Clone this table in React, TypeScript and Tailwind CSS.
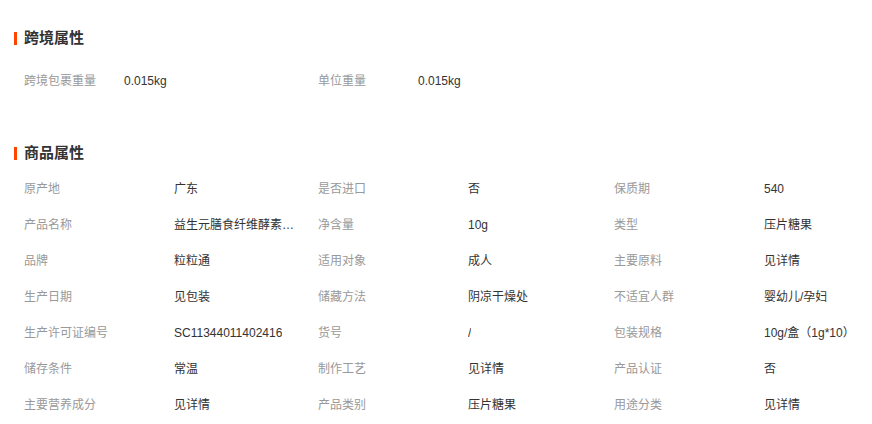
import React from 'react';

const font = { fontFamily: '"Liberation Sans", "Noto Sans CJK SC", sans-serif' };

const crossBorder = [
    { label: '跨境包裹重量', value: '0.015kg' },
    { label: '单位重量', value: '0.015kg' },
];

const attrs = [
    ['原产地', '广东'], ['是否进口', '否'], ['保质期', '540'],
    ['产品名称', '益生元膳食纤维酵素压片糖果'], ['净含量', '10g'], ['类型', '压片糖果'],
    ['品牌', '粒粒通'], ['适用对象', '成人'], ['主要原料', '见详情'],
    ['生产日期', '见包装'], ['储藏方法', '阴凉干燥处'], ['不适宜人群', '婴幼儿/孕妇'],
    ['生产许可证编号', 'SC11344011402416'], ['货号', '/'], ['包装规格', '10g/盒（1g*10）'],
    ['储存条件', '常温'], ['制作工艺', '见详情'], ['产品认证', '否'],
    ['主要营养成分', '见详情'], ['产品类别', '压片糖果'], ['用途分类', '见详情'],
];

function SectionTitle({ title }: { title: string }) {
    return (
        <div className="flex items-center h-4 pl-[14px]">
            <div className="w-[3px] h-[13px] bg-[#ff4400] mr-[7px]" />
            <span className="text-[15px] font-bold text-[#333333] leading-4">{title}</span>
        </div>
    );
}

export default function App() {
    return (
        <div className="w-[872px] h-[424px] bg-white overflow-hidden text-[12px]" style={font}>
            <div className="pt-[30px]">
                <SectionTitle title="跨境属性" />
                <div className="flex pl-[24px] mt-[17px]">
                    {crossBorder.map((item) => (
                        <div key={item.label} className="flex items-center h-9 w-[294px]">
                            <span className="w-[100px] text-[#999999]">{item.label}</span>
                            <span className="text-[#333333]">{item.value}</span>
                        </div>
                    ))}
                </div>
            </div>

            <div className="mt-[46px]">
                <SectionTitle title="商品属性" />
                <div className="grid grid-cols-[294px_296px_258px] pl-[24px] mt-[10px]">
                    {attrs.map(([label, value]) => (
                        <div key={label} className="flex items-center h-9">
                            <span className="w-[150px] shrink-0 text-[#999999]">{label}</span>
                            <span className="max-w-[126px] truncate text-[#333333] whitespace-nowrap">{value}</span>
                        </div>
                    ))}
                </div>
            </div>
        </div>
    );
}
